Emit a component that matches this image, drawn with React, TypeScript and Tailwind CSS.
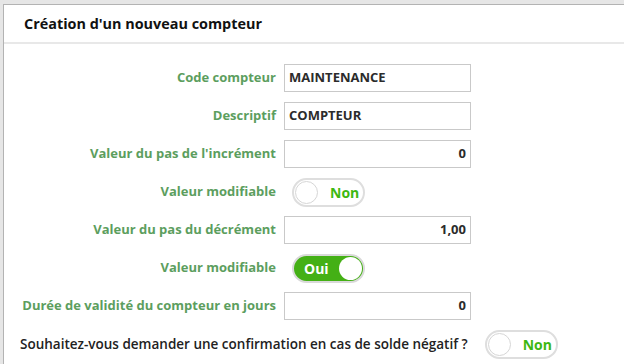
import React from "react";

function Toggle({ on, label }: { on: boolean; label: string }) {
  if (on) {
    return (
      <div className="flex h-[29px] w-[73px] items-center justify-between rounded-full border-2 border-[#d9d9d9] bg-[#44b015] pl-[10px] pr-[1px]">
        <span className="text-[14px] font-bold text-white">{label}</span>
        <span className="h-[23px] w-[23px] rounded-full bg-white" />
      </div>
    );
  }
  return (
    <div className="flex h-[29px] w-[73px] items-center rounded-full border-2 border-[#dedede] bg-white pl-[1px]">
      <span className="h-[23px] w-[23px] rounded-full border border-[#d6d6d6] bg-white" />
      <span className="ml-[12px] text-[14px] font-bold text-[#3db812]">{label}</span>
    </div>
  );
}

function Field({
  label,
  value,
  right = false,
}: {
  label: string;
  value: string;
  right?: boolean;
}) {
  return (
    <div className="flex h-[28px] items-center gap-2">
      <label className="w-[272px] text-right text-[13px] font-bold text-[#5c9e5e]">
        {label}
      </label>
      <div
        className={`flex h-[28px] w-[187px] items-center border border-[#c9c9c9] bg-white px-[4px] text-[13px] font-bold text-[#2b2b2b] ${
          right ? "justify-end" : ""
        }`}
      >
        {value}
      </div>
    </div>
  );
}

function ToggleRow({ label, on }: { label: string; on: boolean }) {
  return (
    <div className="flex h-[28px] items-center gap-2">
      <label className="w-[272px] text-right text-[13px] font-bold text-[#5c9e5e]">
        {label}
      </label>
      <div className="ml-2">
        <Toggle on={on} label={on ? "Oui" : "Non"} />
      </div>
    </div>
  );
}

export default function App() {
  return (
    <div
      className="h-[364px] w-[624px] overflow-hidden bg-[#e6e6e6] pl-[3px] pt-[4px]"
      style={{ fontFamily: "'Open Sans', sans-serif" }}
    >
      <div className="h-full w-[640px] border-l border-t border-[#b3b3b3] bg-white">
        <div className="flex h-[39px] items-center border-b-2 border-[#e8e8e8] pl-[20px]">
          <h1 className="text-[14.4px] font-bold text-[#111]">
            Création d'un nouveau compteur
          </h1>
        </div>
        <div className="flex flex-col gap-[10px] pt-[20px]">
          <Field label="Code compteur" value="MAINTENANCE" />
          <Field label="Descriptif" value="COMPTEUR" />
          <Field label="Valeur du pas de l'incrément" value="0" right />
          <ToggleRow label="Valeur modifiable" on={false} />
          <Field label="Valeur du pas du décrément" value="1,00" right />
          <ToggleRow label="Valeur modifiable" on={true} />
          <Field label="Durée de validité du compteur en jours" value="0" right />
          <div className="flex h-[29px] items-center gap-[17px] pl-[16px]">
            <span className="text-[13.5px] font-semibold text-[#222]">
              Souhaitez-vous demander une confirmation en cas de solde négatif ?
            </span>
            <Toggle on={false} label="Non" />
          </div>
        </div>
      </div>
    </div>
  );
}
